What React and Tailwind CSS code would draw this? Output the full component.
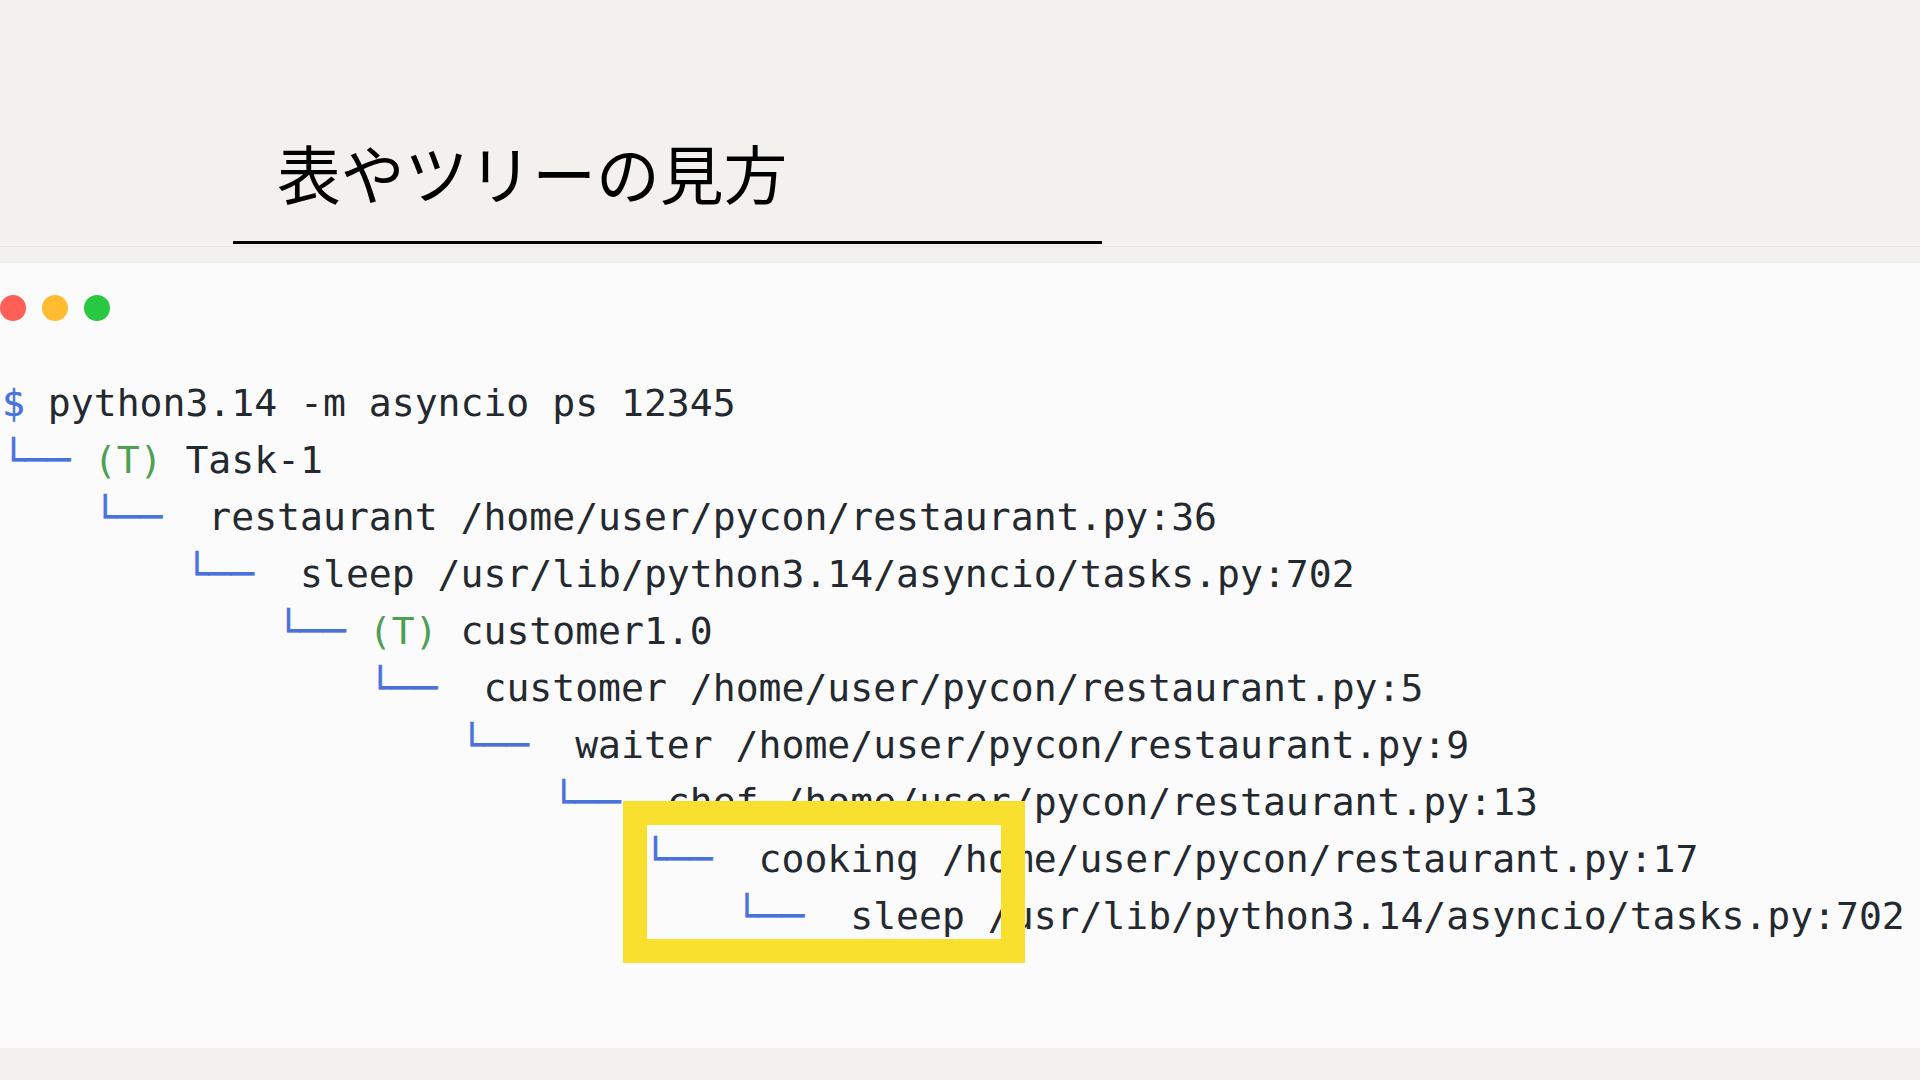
const mono = 'font-["DejaVu_Sans_Mono","Liberation_Mono",monospace]';

const Tree = ({ children }) => <span className="text-[#4a72dc] [-webkit-text-stroke:0.4px_#4a72dc]">{children}</span>;
const T = () => <span className="text-[#4f9f55]">(T)</span>;

const App = () => (
  <div className="min-h-screen bg-[#f2f1ee] overflow-hidden">
    {/* Title */}
    <header className="h-[247px] border-b border-[#e8e7e3]">
      <div className="ml-[233px] w-[869px] h-[244px] pl-[44px] pt-[129px] border-b-[3px] border-black">
        <h1 className='text-[63.8px] leading-[84px] text-black font-["Noto_Sans_CJK_JP",sans-serif]'>表やツリーの見方</h1>
      </div>
    </header>

    {/* Terminal */}
    <main className="relative mt-[16px] h-[785px] bg-[#fbfbfb] pl-[2px]">
      <div className="flex gap-[16px] -ml-[2px] pt-[32px]">
        <div className="w-[26px] h-[26px] rounded-full bg-[#ff5f57]" />
        <div className="w-[26px] h-[26px] rounded-full bg-[#febc2e]" />
        <div className="w-[26px] h-[26px] rounded-full bg-[#28c840]" />
      </div>
      <pre className={`${mono} mt-[54px] text-[38.08px] leading-[57px] text-[#24292f] whitespace-pre`}>
        <div><Tree>$</Tree> python3.14 -m asyncio ps 12345</div>
        <div><Tree>└──</Tree> <T /> Task-1</div>
        <div>{'    '}<Tree>└──</Tree>{'  '}restaurant /home/user/pycon/restaurant.py:36</div>
        <div>{'        '}<Tree>└──</Tree>{'  '}sleep /usr/lib/python3.14/asyncio/tasks.py:702</div>
        <div>{'            '}<Tree>└──</Tree> <T /> customer1.0</div>
        <div>{'                '}<Tree>└──</Tree>{'  '}customer /home/user/pycon/restaurant.py:5</div>
        <div>{'                    '}<Tree>└──</Tree>{'  '}waiter /home/user/pycon/restaurant.py:9</div>
        <div>{'                        '}<Tree>└──</Tree>{'  '}chef /home/user/pycon/restaurant.py:13</div>
        <div>{'                            '}<Tree>└──</Tree>{'  '}cooking /home/user/pycon/restaurant.py:17</div>
        <div>{'                                '}<Tree>└──</Tree>{'  '}sleep /usr/lib/python3.14/asyncio/tasks.py:702</div>
      </pre>
      {/* Highlight box */}
      <div className="absolute left-[623px] top-[538px] w-[402px] h-[162px] border-[24px] border-[#f9e02f]" />
    </main>
  </div>
);

export default App;
